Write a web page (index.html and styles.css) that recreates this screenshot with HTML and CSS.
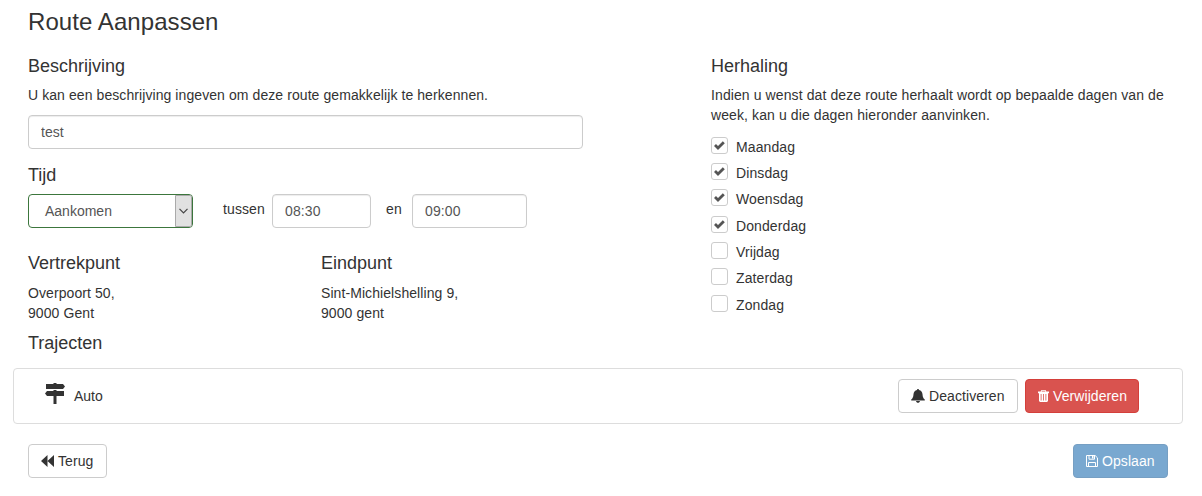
FILE: index.html
```html
<!DOCTYPE html>
<html lang="nl">
<head>
<meta charset="utf-8">
<title>Route Aanpassen</title>
<link rel="stylesheet" href="styles.css">
</head>
<body>
<main class="page">
  <h3 class="page-title">Route Aanpassen</h3>
  <div class="columns">
    <section class="details">
      <h4>Beschrijving</h4>
      <p class="hint">U kan een beschrijving ingeven om deze route gemakkelijk te herkennen.</p>
      <input class="control description" type="text" value="test">
      <h4 class="time-title">Tijd</h4>
      <div class="time-row">
        <div class="select">
          <span class="select-value">Aankomen</span>
          <span class="select-arrow"><svg width="9" height="6" viewBox="0 0 9 6"><path d="M.5.8l4 4 4-4" fill="none" stroke="#444" stroke-width="1.2"/></svg></span>
        </div>
        <label class="between">tussen</label>
        <input class="control from" type="text" value="08:30">
        <label class="and">en</label>
        <input class="control until" type="text" value="09:00">
      </div>
      <div class="places">
        <div>
          <h4>Vertrekpunt</h4>
          <address>Overpoort 50,<br>9000 Gent</address>
        </div>
        <div>
          <h4>Eindpunt</h4>
          <address>Sint-Michielshelling 9,<br>9000 gent</address>
        </div>
      </div>
    </section>
    <section class="repeat">
      <h4>Herhaling</h4>
      <p class="hint">Indien u wenst dat deze route herhaalt wordt op bepaalde dagen van de<br>week, kan u die dagen hieronder aanvinken.</p>
      <ul class="days">
        <li><span class="box"><svg class="check" viewBox="0 0 11 9"><path d="M1 4l3 3 5.800-5.800" /></svg></span><span>Maandag</span></li>
        <li><span class="box"><svg class="check" viewBox="0 0 11 9"><path d="M1 4l3 3 5.800-5.800" /></svg></span><span>Dinsdag</span></li>
        <li><span class="box"><svg class="check" viewBox="0 0 11 9"><path d="M1 4l3 3 5.800-5.800" /></svg></span><span>Woensdag</span></li>
        <li class="wide-gap"><span class="box"><svg class="check" viewBox="0 0 11 9"><path d="M1 4l3 3 5.800-5.800" /></svg></span><span>Donderdag</span></li>
        <li><span class="box"></span><span>Vrijdag</span></li>
        <li><span class="box"></span><span>Zaterdag</span></li>
        <li class="wide-gap"><span class="box"></span><span>Zondag</span></li>
      </ul>
    </section>
  </div>
  <h4 class="routes-title">Trajecten</h4>
  <div class="route">
    <svg class="sign" viewBox="0 0 20 21"><path d="M8.500 0h3v1h6.500l2 2.500-2 2.500H1V1h7.500zM8.500 7h3v1H19v5h-7.500v8h-3v-8H2L0 10.500 2 8h6.500z" fill="#333"/></svg>
    <span class="route-name">Auto</span>
    <button class="btn deactivate"><svg width="14" height="14" viewBox="0 0 14 14"><path d="M7 0c.7 0 1 .5 1 1.100 2.200.5 3.300 2 3.500 4.200.2 3 .9 4.200 2.300 5.200v1H.2v-1c1.400-1 2.100-2.200 2.300-5.200C2.700 3.100 3.800 1.600 6 1.100 6 .5 6.300 0 7 0zM5 12h4C8.800 13.200 8 13.800 7 13.800S5.200 13.200 5 12z" fill="currentColor"/></svg><span>Deactiveren</span></button>
    <button class="btn danger"><svg width="12" height="12" viewBox="0 0 12 12"><path d="M3.500 0h4l.8 1.500H11v1.700h-1V11l-1 1H2l-1-1V3.200H0V1.500h2.700zM4 .8l-.4.700h3.800L7 .8zM2.700 4v6.500h.8V4zM5.100 4v6.500h.8V4zM7.500 4v6.500h.8V4z" fill="currentColor" fill-rule="evenodd"/></svg><span>Verwijderen</span></button>
  </div>
  <footer class="actions">
    <button class="btn back"><svg width="13" height="12" viewBox="0 0 13 12"><path d="M6.500 0v12L0 6zM13 0v12L6.500 6z" fill="currentColor"/></svg><span>Terug</span></button>
    <button class="btn primary"><svg width="12" height="12" viewBox="0 0 12 12"><path d="M.5.500h8.600l2.400 2.400v8.600H.5zM3 .5v3.700h5.500V.5M2.500 11.500V7.500h7v4" fill="none" stroke="currentColor"/><path d="M6 1h1.500v2.500H6z" fill="currentColor"/></svg><span>Opslaan</span></button>
  </footer>
</main>
</body>
</html>
```
FILE: styles.css
```css
* { box-sizing: border-box; }
body {
  margin: 0;
  background: #fff;
  color: #333;
  font: 14px/20px "Liberation Sans", Arial, sans-serif;
}
.page { width: 1170px; margin-left: 13px; padding-top: 9px; }
h3, h4, p, ul { margin: 0; padding: 0; font-weight: 400; }
h4 { font-size: 18px; line-height: 20px; }
.page-title { padding-left: 15px; font-size: 24px; line-height: 26px; letter-spacing: .07px; }
.columns { display: flex; margin-top: 21px; padding-left: 15px; }
.details { width: 683px; }
.repeat { width: 460px; }
.hint { margin-top: 9px; white-space: nowrap; letter-spacing: .08px; }
.repeat .hint { letter-spacing: .1px; }
.control {
  display: block;
  height: 34px;
  padding: 6px 12px;
  border: 1px solid #ccc;
  border-radius: 4px;
  background: #fff;
  box-shadow: inset 0 1px 1px rgba(0, 0, 0, .075);
  color: #555;
  font: inherit;
}
.description { width: 555px; margin-top: 10px; }
.time-title { margin-top: 16px; }
.time-row { display: flex; margin-top: 9px; }
.time-row label { line-height: 31px; letter-spacing: .1px; }
.time-row .control { letter-spacing: .1px; }
.select {
  display: flex;
  width: 165px;
  height: 34px;
  border: 1px solid #3c763d;
  border-radius: 4px;
  color: #555;
}
.select-value { flex: 1; padding-left: 16px; line-height: 32px; }
.select-arrow {
  display: flex;
  align-items: center;
  justify-content: center;
  width: 17px;
  padding-right: 1px;
  border: 1px solid #aaa;
  border-radius: 0 2px 2px 0;
  background: #e1e1e1;
}
.between { width: 49px; margin-left: 30px; }
.from { width: 99px; }
.and { width: 26px; margin-left: 15px; }
.until { width: 115px; }
.places { display: grid; grid-template-columns: 293px 292px; margin-top: 25px; }
address { margin-top: 10px; font-style: normal; letter-spacing: .08px; }
.days { margin-top: 12px; list-style: none; letter-spacing: .1px; }
.days li { display: flex; gap: 8px; height: 17px; margin-bottom: 9px; line-height: 20px; }
.days .wide-gap { margin-top: 10px; }
.box {
  display: flex;
  align-items: center;
  justify-content: center;
  width: 17px;
  height: 17px;
  padding-right: 1px;
  border: 1px solid #ccc;
  border-radius: 3px;
}
.check { width: 11px; height: 9px; fill: none; stroke: #555; stroke-width: 2.800; }
.days li:not(.wide-gap) + li { margin-top: 0; }
.days li.wide-gap.wide-gap.wide-gap { margin-top: 1px; }
.days { display: flex; flex-direction: column; }
.routes-title { margin-top: 10px; padding-left: 15px; }
.route {
  display: flex;
  align-items: center;
  height: 56px;
  margin-top: 15px;
  padding: 0 43px 0 31px;
  border: 1px solid #ddd;
  border-radius: 4px;
}
.sign { width: 20px; height: 21px; margin: -5px 9px 0 0; }
.route-name { flex: 1; }
.btn {
  display: flex;
  align-items: center;
  gap: 4px;
  height: 34px;
  padding: 0 0 0 12px;
  border: 1px solid #ccc;
  border-radius: 4px;
  background: #fff;
  color: #333;
  font: inherit;
  letter-spacing: .08px;
}
.deactivate { width: 120px; }
.back { width: 79px; }
.danger { width: 114px; margin-left: 7px; border-color: #d43f3a; background: #d9534f; color: #fff; gap: 3px; }
.primary { width: 95px; border-color: #2e6da4; background: #337ab7; color: #fff; opacity: .65; }
.actions { display: flex; justify-content: space-between; margin-top: 20px; padding: 0 15px; }
```
